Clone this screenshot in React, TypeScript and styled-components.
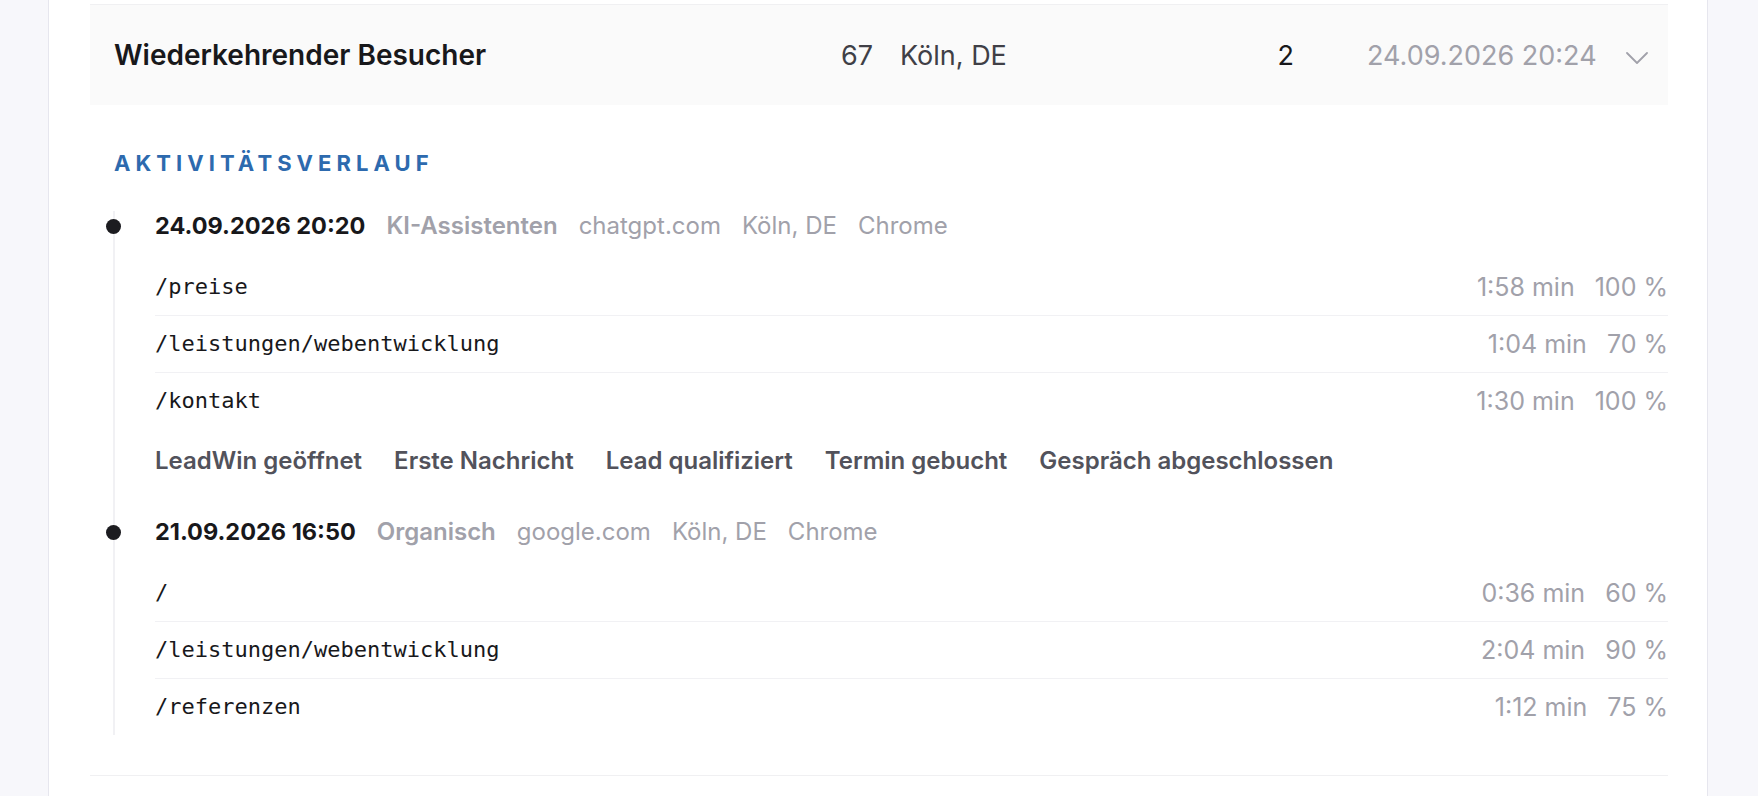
import React from 'react'
import styled, { createGlobalStyle } from 'styled-components'

const GlobalStyle = createGlobalStyle`
  html, body {
    margin: 0;
    padding: 0;
    background: #f7f7fb;
    font-family: Inter, 'Noto Sans', sans-serif;
    color: #18181b;
  }
`

type PageView = { path: string; duration: string; scroll: string }
type Session = {
  time: string
  channel: string
  source: string
  location: string
  browser: string
  pages: PageView[]
  events?: string[]
}

const sessions: Session[] = [
  {
    time: '24.09.2026 20:20',
    channel: 'KI-Assistenten',
    source: 'chatgpt.com',
    location: 'Köln, DE',
    browser: 'Chrome',
    pages: [
      { path: '/preise', duration: '1:58 min', scroll: '100 %' },
      { path: '/leistungen/webentwicklung', duration: '1:04 min', scroll: '70 %' },
      { path: '/kontakt', duration: '1:30 min', scroll: '100 %' },
    ],
    events: [
      'LeadWin geöffnet',
      'Erste Nachricht',
      'Lead qualifiziert',
      'Termin gebucht',
      'Gespräch abgeschlossen',
    ],
  },
  {
    time: '21.09.2026 16:50',
    channel: 'Organisch',
    source: 'google.com',
    location: 'Köln, DE',
    browser: 'Chrome',
    pages: [
      { path: '/', duration: '0:36 min', scroll: '60 %' },
      { path: '/leistungen/webentwicklung', duration: '2:04 min', scroll: '90 %' },
      { path: '/referenzen', duration: '1:12 min', scroll: '75 %' },
    ],
  },
]

const PageShell = styled.div`
  min-height: 796px;
  padding: 0 50px 0 48px;
  display: flex;
`

const Card = styled.main`
  flex: 1;
  background: #ffffff;
  border-left: 1px solid #e6e6ee;
  border-right: 1px solid #e6e6ee;
  padding: 0 39px 0 41px;
`

const PrevRowEdge = styled.div`
  height: 4px;
  border-bottom: 1px solid #f0f0f2;
`

const VisitorRow = styled.div`
  display: grid;
  grid-template-columns: 672px 87px 300px 121px 332px 22px;
  align-items: center;
  height: 100px;
  padding: 0 20px 0 24px;
  background: #fafafa;
  font-size: 27px;
`

const VisitorName = styled.div`
  font-size: 28px;
  font-weight: 600;
  color: #18181b;
`

const Cell = styled.div<{ $align?: 'left' | 'right'; $tone?: 'dark' | 'muted' | 'strong'; $pad?: number }>`
  text-align: ${(p) => p.$align ?? 'left'};
  padding-left: ${(p) => p.$pad ?? 0}px;
  color: ${(p) => (p.$tone === 'muted' ? '#a1a1aa' : p.$tone === 'strong' ? '#18181b' : '#3f3f46')};
  white-space: nowrap;
`

const Chevron = styled.svg`
  display: block;
  margin-top: 6px;
`

const Detail = styled.section`
  padding: 44px 0 40px 24px;
  border-bottom: 1px solid #f0f0f2;
`

const SectionTitle = styled.h3`
  margin: 0;
  font-size: 22px;
  line-height: 28px;
  font-weight: 700;
  letter-spacing: 0.23em;
  text-transform: uppercase;
  color: #2d6aae;
`

const Timeline = styled.div`
  margin: 34px 0 0 -1px;
`

const TimelineItem = styled.div<{ $last?: boolean }>`
  position: relative;
  border-left: 2px solid #f1f1f4;
  padding: 0 0 ${(p) => (p.$last ? 0 : 42)}px 40px;
`

const Dot = styled.span`
  position: absolute;
  left: -9px;
  top: 8px;
  width: 15px;
  height: 15px;
  border-radius: 50%;
  background: #1c1c20;
`

const SessionHead = styled.div`
  display: flex;
  align-items: baseline;
  gap: 21px;
  height: 30px;
  line-height: 30px;
  font-size: 24px;
  color: #a1a1aa;
  white-space: nowrap;
`

const SessionTime = styled.span`
  font-size: 23.5px;
  font-weight: 700;
  color: #18181b;
`

const SessionChannel = styled.span`
  font-weight: 600;
  color: #a1a1aa;
`

const PageList = styled.ul`
  list-style: none;
  margin: 18px 0 0;
  padding: 0;
`

const PageRow = styled.li`
  display: flex;
  align-items: center;
  justify-content: space-between;
  padding: 16px 0;
  line-height: 24px;
  border-bottom: 1px solid #f1f1f4;

  &:last-child {
    border-bottom: none;
  }
`

const PagePath = styled.span`
  font-family: 'DejaVu Sans Mono', 'Liberation Mono', monospace;
  font-size: 22px;
  color: #18181b;
`

const PageStats = styled.span`
  display: flex;
  gap: 20px;
  font-size: 25px;
  color: #a1a1aa;
`

const Events = styled.div`
  display: flex;
  gap: 32px;
  margin-top: 18px;
  line-height: 28px;
  font-size: 24px;
  font-weight: 600;
  color: #52525b;
`

export default function App() {
  return (
    <>
      <GlobalStyle />
      <PageShell>
        <Card>
          <PrevRowEdge />
          <VisitorRow>
            <VisitorName>Wiederkehrender Besucher</VisitorName>
            <Cell $align="right">67</Cell>
            <Cell $pad={27}>Köln, DE</Cell>
            <Cell $align="right" $tone="strong">2</Cell>
            <Cell $pad={73} $tone="muted">24.09.2026 20:24</Cell>
            <Chevron width="22" height="12" viewBox="0 0 22 12" fill="none">
              <polyline points="1,1 11,11 21,1" stroke="#a1a1aa" strokeWidth="1.8" strokeLinecap="round" strokeLinejoin="round" />
            </Chevron>
          </VisitorRow>

          <Detail>
            <SectionTitle>Aktivitätsverlauf</SectionTitle>
            <Timeline>
              {sessions.map((s, i) => (
                <TimelineItem key={s.time} $last={i === sessions.length - 1}>
                  <Dot />
                  <SessionHead>
                    <SessionTime>{s.time}</SessionTime>
                    <SessionChannel>{s.channel}</SessionChannel>
                    <span>{s.source}</span>
                    <span>{s.location}</span>
                    <span>{s.browser}</span>
                  </SessionHead>
                  <PageList>
                    {s.pages.map((p) => (
                      <PageRow key={p.path}>
                        <PagePath>{p.path}</PagePath>
                        <PageStats>
                          <span>{p.duration}</span>
                          <span>{p.scroll}</span>
                        </PageStats>
                      </PageRow>
                    ))}
                  </PageList>
                  {s.events && (
                    <Events>
                      {s.events.map((e) => (
                        <span key={e}>{e}</span>
                      ))}
                    </Events>
                  )}
                </TimelineItem>
              ))}
            </Timeline>
          </Detail>
        </Card>
      </PageShell>
    </>
  )
}
